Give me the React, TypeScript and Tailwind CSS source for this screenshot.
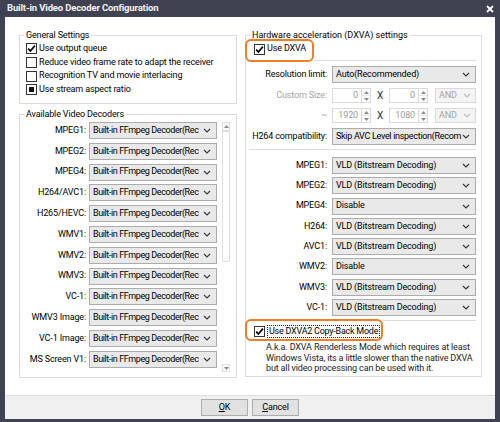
import React from "react";

type CheckState = "on" | "off" | "mixed";

const generalOptions: { label: string; state: CheckState }[] = [
  { label: "Use output queue", state: "on" },
  { label: "Reduce video frame rate to adapt the receiver", state: "off" },
  { label: "Recognition TV and movie interlacing", state: "off" },
  { label: "Use stream aspect ratio", state: "mixed" },
];

const decoders = [
  "MPEG1:",
  "MPEG2:",
  "MPEG4:",
  "H264/AVC1:",
  "H265/HEVC:",
  "WMV1:",
  "WMV2:",
  "WMV3:",
  "VC-1:",
  "WMV3 Image:",
  "VC-1 Image:",
  "MS Screen V1:",
];

const dxvaModes = [
  { label: "MPEG1:", value: "VLD (Bitstream Decoding)" },
  { label: "MPEG2:", value: "VLD (Bitstream Decoding)" },
  { label: "MPEG4:", value: "Disable" },
  { label: "H264:", value: "VLD (Bitstream Decoding)" },
  { label: "AVC1:", value: "VLD (Bitstream Decoding)" },
  { label: "WMV2:", value: "Disable" },
  { label: "WMV3:", value: "VLD (Bitstream Decoding)" },
  { label: "VC-1:", value: "VLD (Bitstream Decoding)" },
];

function Check({ state }: { state: CheckState }) {
  return (
    <span className="flex h-[11px] w-[11px] shrink-0 items-center justify-center border border-[#333] bg-white">
      {state === "on" && (
        <svg viewBox="0 0 9 9" className="h-[9px] w-[9px]">
          <path d="M1.2 4.6 L3.4 7 L7.9 1.6" fill="none" stroke="#000" strokeWidth="1.7" />
        </svg>
      )}
      {state === "mixed" && <span className="h-[5px] w-[5px] bg-[#111]" />}
    </span>
  );
}

function Chevron({ light }: { light?: boolean }) {
  return (
    <svg viewBox="0 0 8 5" className="h-[5px] w-[8px] shrink-0">
      <path d="M1 1 L4 4 L7 1" fill="none" stroke={light ? "#bdbdbd" : "#3a3a3a"} strokeWidth="1.2" />
    </svg>
  );
}

function Combo({ text, className = "", textClass = "" }: { text: string; className?: string; textClass?: string }) {
  return (
    <div className={`flex h-[17px] min-w-0 items-center border border-[#acacac] bg-[#e9e9e9] pl-[3px] pr-[5px] ${className}`}>
      <span className={`min-w-0 flex-1 overflow-hidden whitespace-nowrap ${textClass}`}>{text}</span>
      <Chevron />
    </div>
  );
}

function Tri({ down }: { down?: boolean }) {
  return (
    <svg viewBox="0 0 5 3" className="h-[3px] w-[5px]">
      <path d={down ? "M0 0 L5 0 L2.5 3 Z" : "M0 3 L5 3 L2.5 0 Z"} fill="#8a8a8a" />
    </svg>
  );
}

function Spin({ value }: { value: string }) {
  return (
    <div className="flex h-[15px] w-[39px] shrink-0 border border-[#d9d9d9] bg-white">
      <span className="flex-1 pr-[3px] text-right leading-[13px] text-[#9a9a9a]">{value}</span>
      <div className="flex w-[9px] flex-col border-l border-[#d9d9d9]">
        <span className="flex flex-1 items-center justify-center border-b border-[#e6e6e6]">
          <Tri />
        </span>
        <span className="flex flex-1 items-center justify-center">
          <Tri down />
        </span>
      </div>
    </div>
  );
}

function AndBox() {
  return (
    <div className="flex h-[15px] w-[41px] items-center border border-[#d9d9d9] bg-[#f4f4f4] pl-[3px] pr-[4px] text-[#a3a3a3]">
      <span className="flex-1">AND</span>
      <Chevron light />
    </div>
  );
}

function SizeRow({ label, a, b }: { label: string; a: string; b: string }) {
  return (
    <div className="flex h-[15px] items-center">
      <span className="w-[75px] shrink-0 text-right text-[#a3a3a3]">{label}</span>
      <div className="ml-[5px] flex items-center">
        <Spin value={a} />
        <span className="w-[18px] text-center text-[10px] text-[#2b3445]">X</span>
        <Spin value={b} />
        <div className="ml-[7px]">
          <AndBox />
        </div>
      </div>
    </div>
  );
}

export default function App() {
  return (
    <div className="flex h-[422px] w-[500px] flex-col overflow-hidden bg-[#3f4250] font-['Segoe_UI','Roboto',sans-serif] text-[9px] tracking-[-0.15px] text-black">
      {/* title bar */}
      <div className="flex h-[17px] shrink-0 items-center justify-between pl-[7px] pr-[6px]">
        <span className="text-[9.5px] font-bold text-[#f2f2f2]">Built-in Video Decoder Configuration</span>
        <svg viewBox="0 0 8 8" className="h-[8px] w-[8px]">
          <path d="M1 1 L7 7 M7 1 L1 7" stroke="#fff" strokeWidth="1.8" />
        </svg>
      </div>

      <div className="mx-[5px] flex flex-col bg-white">
        <div className="flex h-[378px] gap-[8px] px-[14px] pt-[12px]">
          {/* left column */}
          <div className="flex w-[218px] shrink-0 flex-col gap-[4px]">
            <fieldset className="h-[75px] min-w-0 border border-[#dcdcdc]">
              <legend className="ml-[4px] px-[2px] leading-[12px]">General Settings</legend>
              <div className="flex flex-col pl-[6px] pt-[1px]">
                {generalOptions.map((o) => (
                  <div key={o.label} className="flex h-[13.7px] items-center gap-[2px] whitespace-nowrap">
                    <Check state={o.state} />
                    <span>{o.label}</span>
                  </div>
                ))}
              </div>
            </fieldset>

            <fieldset className="h-[270px] min-w-0 border border-[#dcdcdc]">
              <legend className="ml-[4px] px-[2px] leading-[12px]">Available Video Decoders</legend>
              <div className="flex pt-[2px]">
                <div className="flex flex-col gap-[3.8px]">
                  {decoders.map((d) => (
                    <div key={d} className="flex h-[17px] items-center">
                      <span className="w-[66px] shrink-0 whitespace-nowrap text-right">{d}</span>
                      <Combo
                        text="Built-in FFmpeg Decoder(Rec"
                        className="ml-[3px] w-[128px] shrink-0"
                        textClass="tracking-[-0.4px]"
                      />
                    </div>
                  ))}
                </div>
                {/* scrollbar */}
                <div className="ml-[5px] flex h-[250px] w-[8px] shrink-0 flex-col">
                  <div className="flex h-[9px] items-center justify-center border border-[#dedede] bg-[#fafafa]">
                    <Tri />
                  </div>
                  <div className="h-[131px] rounded-[2px] border border-[#dedede] bg-white" />
                  <div className="flex-1" />
                  <div className="flex h-[8px] items-center justify-center border border-[#dedede] bg-[#fafafa]">
                    <Tri down />
                  </div>
                </div>
              </div>
            </fieldset>
          </div>

          {/* right column */}
          <fieldset className="h-[348px] w-[237px] min-w-0 shrink-0 border border-[#dcdcdc]">
            <legend className="ml-[4px] px-[2px] leading-[12px] tracking-normal">Hardware acceleration (DXVA) settings</legend>
            <div className="flex min-w-0 flex-col pl-[6px] pr-[5px]">
              <div className="flex h-[20px]">
                <div className="relative flex h-[16px] w-[62px] shrink-0 items-center gap-[2px] whitespace-nowrap pl-[2px]">
                  <Check state="on" />
                  <span>Use DXVA</span>
                  <div className="absolute -left-[7px] -top-[2px] right-0 h-[23px] rounded-[6px] border-2 border-[#f47d22]" />
                </div>
                <div className="flex-1 border-b border-[#dcdcdc]" />
              </div>

              <div className="mt-[5px] flex h-[17px] items-center">
                <span className="w-[75px] shrink-0 whitespace-nowrap text-right">Resolution limit:</span>
                <Combo text="Auto(Recommended)" className="ml-[5px] flex-1" />
              </div>

              <div className="mt-[5px]">
                <SizeRow label="Custom Size:" a="0" b="0" />
              </div>
              <div className="mt-[5px]">
                <SizeRow label="~" a="1920" b="1080" />
              </div>

              <div className="mt-[5px] flex h-[17px] items-center">
                <span className="w-[75px] shrink-0 whitespace-nowrap text-right">H264 compatibility:</span>
                <Combo text="Skip AVC Level inspection(Recom" className="ml-[5px] flex-1" textClass="tracking-[-0.3px]" />
              </div>

              <div className="-ml-[3px] mt-[4px] border-t border-[#dcdcdc]" />

              <div className="mt-[7px] flex flex-col gap-[3.3px]">
                {dxvaModes.map((m) => (
                  <div key={m.label} className="flex h-[17px] items-center">
                    <span className="w-[75px] shrink-0 text-right">{m.label}</span>
                    <Combo text={m.value} className="ml-[5px] flex-1" />
                  </div>
                ))}
              </div>

              <div className="mt-[4px] flex">
                <div className="relative flex h-[22px] w-[131px] shrink-0 items-center gap-[2px] whitespace-nowrap pl-[2px]">
                  <Check state="on" />
                  <span className="border border-dotted border-[#222] px-[1px] leading-[11px] tracking-[-0.25px]">Use DXVA2 Copy-Back Mode</span>
                  <div className="absolute -left-[7px] -top-[1px] right-0 h-[22px] rounded-[6px] border-2 border-[#f47d22]" />
                </div>
                <div className="flex-1 border-t border-[#dcdcdc]" />
              </div>

              <div className="ml-[14px] flex flex-col whitespace-nowrap leading-[10.5px] text-[#222]">
                <span>A.k.a. DXVA Renderless Mode which requires at least</span>
                <span>Windows Vista, its a little slower than the native DXVA</span>
                <span>but all video processing can be used with it.</span>
              </div>
            </div>
          </fieldset>
        </div>

        {/* footer */}
        <div className="flex h-[24px] items-center justify-center gap-[4px] border-t border-[#dfdfdf] bg-[#f0f0f0]">
          <button className="flex h-[17px] w-[47px] items-center justify-center border border-[#adadad] bg-[#e1e1e1]">
            <span>
              <span className="underline">O</span>K
            </span>
          </button>
          <button className="flex h-[17px] w-[47px] items-center justify-center border border-[#adadad] bg-[#e1e1e1]">
            <span>
              <span className="underline">C</span>ancel
            </span>
          </button>
        </div>
      </div>
    </div>
  );
}
